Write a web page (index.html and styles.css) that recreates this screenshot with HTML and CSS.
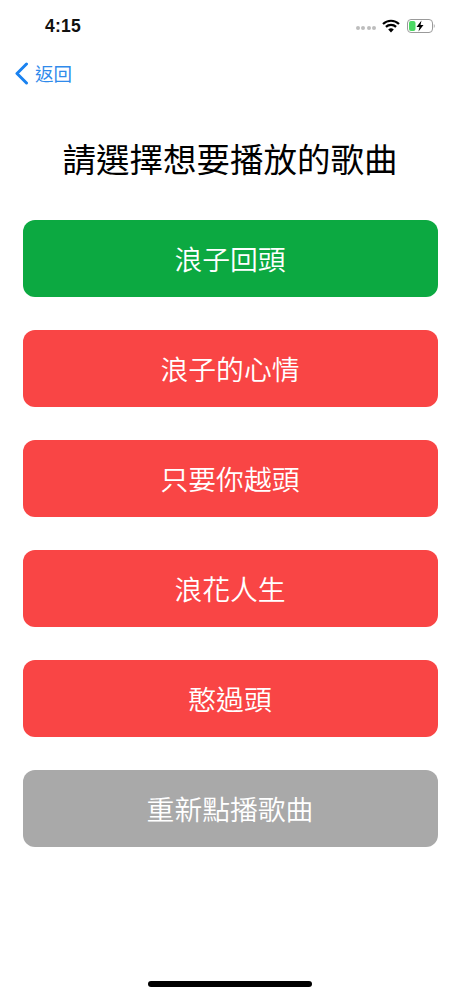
FILE: index.html
```html
<!DOCTYPE html>
<html lang="zh-Hant">
<head>
<meta charset="utf-8">
<title>請選擇想要播放的歌曲</title>
<link rel="stylesheet" href="styles.css">
</head>
<body>
<div class="screen">
  <header class="status">
    <span class="time">4:15</span>
    <div class="status-icons">
      <div class="signal"><i></i><i></i><i></i><i></i></div>
      <svg class="wifi" width="18" height="14" viewBox="0 0 18 14"><path d="M1 5 A11.5 11.5 0 0 1 17 5" fill="none" stroke="#000" stroke-width="2.2"/><path d="M3.9 7.9 A7.4 7.4 0 0 1 14.1 7.9" fill="none" stroke="#000" stroke-width="2.2"/><path d="M9 13.6 L6.2 10.6 A4 4 0 0 1 11.8 10.6 Z" fill="#000"/></svg>
      <svg class="battery" width="29" height="14" viewBox="0 0 29 14"><rect x="0.5" y="0.5" width="25" height="13" rx="3.5" fill="#fff" stroke="#9a9a9a"/><rect x="2" y="2" width="6.5" height="10" rx="2" fill="#4cd964"/><path d="M26.8 5 C28 5.400 28 8.600 26.800 9 Z" fill="#9a9a9a"/><path d="M14.500 1.500 L9.500 8 L12.500 8 L11.500 12.500 L16.500 6 L13.500 6 Z" fill="#000"/></svg>
    </div>
  </header>
  <nav class="nav">
    <svg class="chevron" width="15" height="23" viewBox="0 0 15 23"><path d="M12.500 2 L3 11.500 L12.500 21" fill="none" stroke="#1a82f0" stroke-width="3" stroke-linecap="round" stroke-linejoin="round"/></svg>
    <span class="back">返回</span>
  </nav>
  <h1 class="title">請選擇想要播放的歌曲</h1>
  <main class="list">
    <div class="btn green">浪子回頭</div>
    <div class="btn red">浪子的心情</div>
    <div class="btn red">只要你越頭</div>
    <div class="btn red">浪花人生</div>
    <div class="btn red">憨過頭</div>
    <div class="btn gray">重新點播歌曲</div>
  </main>
  <div class="home"></div>
</div>
</body>
</html>
```
FILE: styles.css
```css
* { box-sizing: border-box; }
html, body { margin: 0; padding: 0; background: #fff; }
body { font-family: "Noto Sans CJK TC", "Liberation Sans", sans-serif; }
.screen { width: 460px; height: 996px; display: flex; flex-direction: column; position: relative; overflow: hidden; }
.status { height: 52px; display: flex; align-items: center; justify-content: space-between; padding: 0 15px 0 45px; }
.time { font-family: "Liberation Sans", sans-serif; font-weight: 700; font-size: 17.500px; color: #111; letter-spacing: 0.2px; }
.status-icons { display: flex; align-items: center; gap: 7px; padding-right: 9px; }
.signal { display: flex; gap: 1.500px; margin-top: 4px; margin-right: -1px; }
.signal i { width: 4px; height: 4px; border-radius: 50%; background: #bdbdbd; }
.nav { height: 43px; display: flex; align-items: center; gap: 6px; padding-left: 14px; }
.back { font-size: 18.500px; line-height: 24px; color: #2f8aeb; margin-top: -2px; }
.title { margin: 39px 0 0; height: 48px; line-height: 48px; text-align: center; font-size: 33.500px; font-weight: 400; color: #000; }
.list { margin-top: 38px; padding: 0 22.500px; display: flex; flex-direction: column; gap: 33px; }
.btn { height: 77px; border-radius: 12px; display: flex; align-items: center; justify-content: center; color: #fff; font-size: 27.800px; font-weight: 350; padding-bottom: 1px; }
.green { background: #0ca941; }
.red { background: #f94545; }
.gray { background: #a9a9a9; }
.home { position: absolute; left: 148px; top: 981px; width: 164px; height: 6px; border-radius: 3px; background: #000; }
```
